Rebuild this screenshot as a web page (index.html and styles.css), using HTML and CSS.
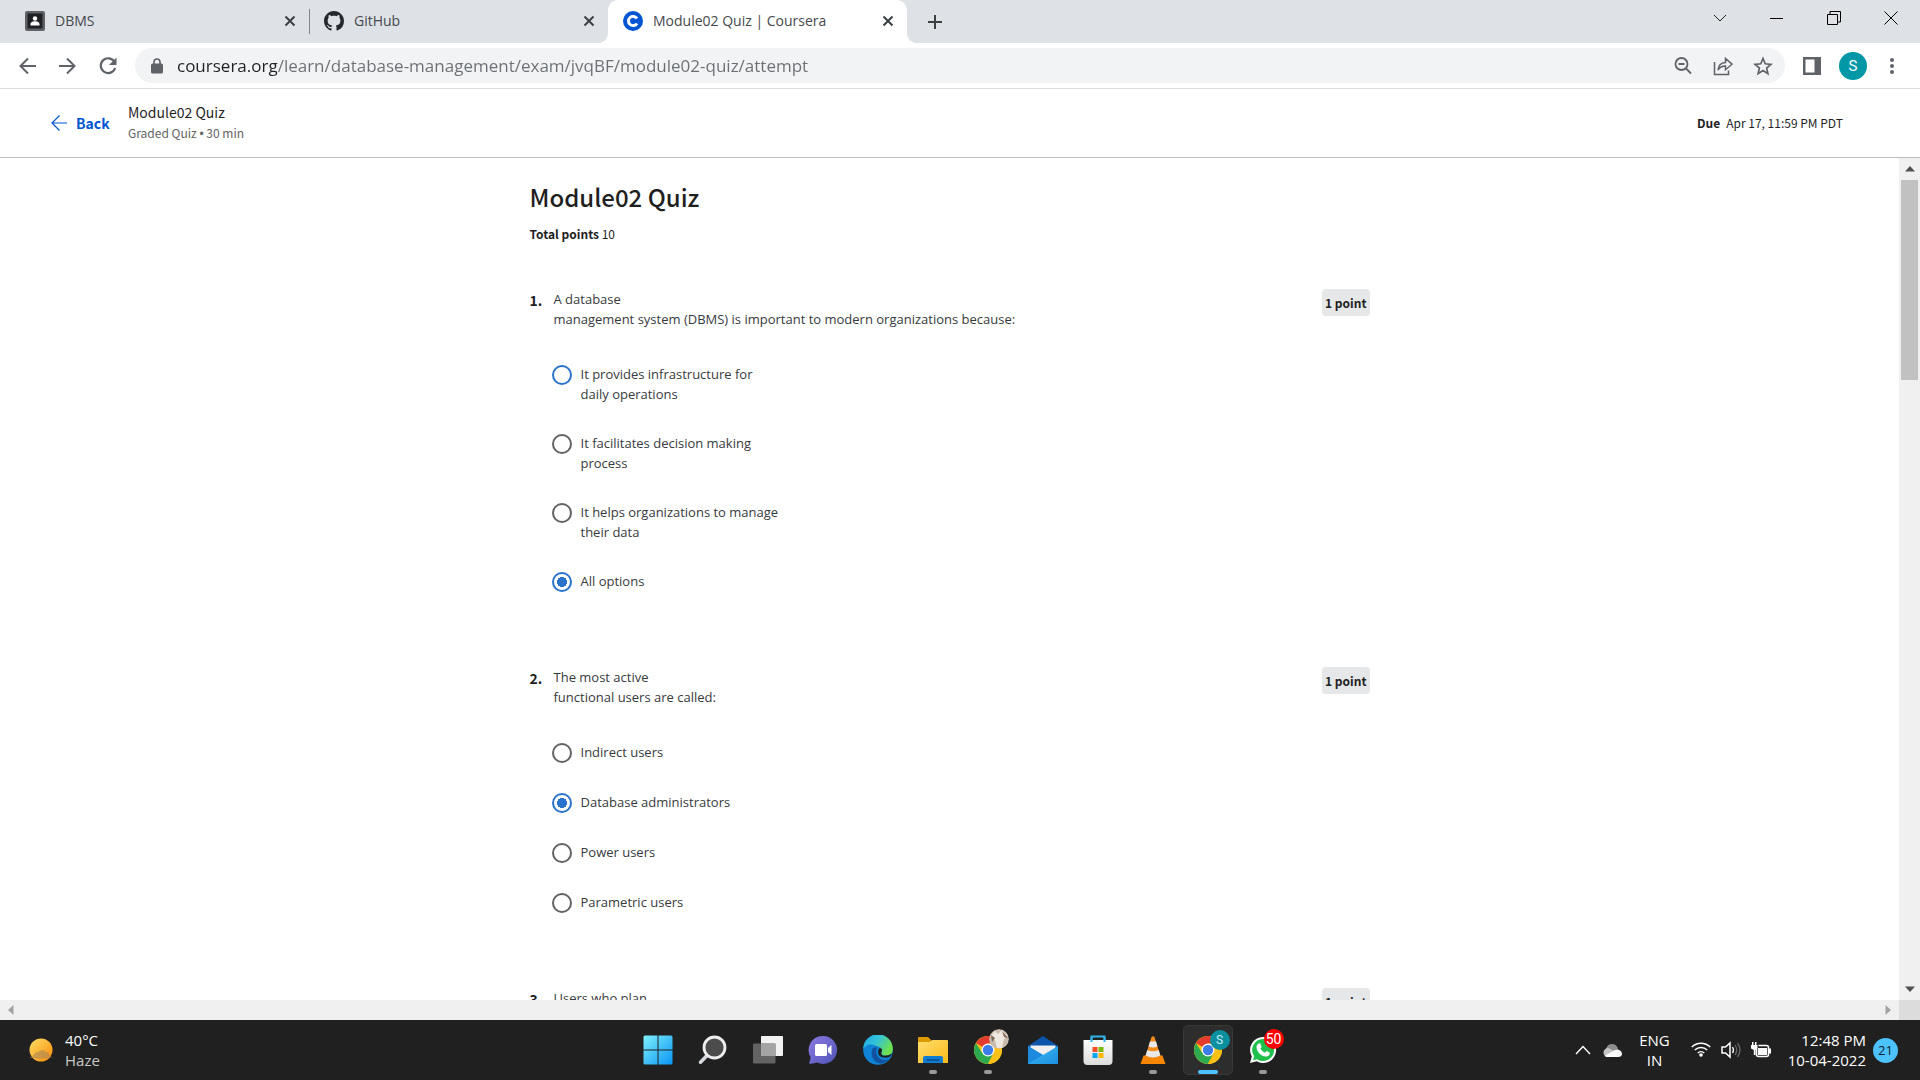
FILE: index.html
```html
<!DOCTYPE html>
<html lang="en">
<head>
<meta charset="utf-8">
<title>Module02 Quiz | Coursera</title>
<link rel="stylesheet" href="styles.css">
</head>
<body>
<svg class="defs" aria-hidden="true">
  <defs>
    <symbol id="i-close" viewBox="0 0 12 12"><path d="M1.5 1.5l9 9M10.500 1.500l-9 9" stroke="#3c4043" stroke-width="2" fill="none"/></symbol>
    <symbol id="i-chrome" viewBox="0 0 28 28">
      <circle cx="14" cy="14" r="14" fill="#fbc116"/>
      <path d="M14 14L1.900 7A14 14 0 0 1 26.100 7z" fill="#e33b2e"/>
      <path d="M1.900 7A14 14 0 0 0 14 28L19.600 17.200 14 14 8.400 17.200z" fill="#2da94f"/>
      <path d="M14 7.500H26.400A14 14 0 0 1 14 28L19.600 17.200z" fill="#fbc116"/>
      <circle cx="14" cy="14" r="6.500" fill="#fff"/><circle cx="14" cy="14" r="5.200" fill="#3d7de8"/>
    </symbol>
    <linearGradient id="g-win" x1="0" y1="0" x2="1" y2="1"><stop offset="0" stop-color="#7df1fb"/><stop offset="1" stop-color="#0a94f5"/></linearGradient>
    <linearGradient id="g-chat" x1="0" y1="0" x2="1" y2="1"><stop offset="0" stop-color="#8b7be0"/><stop offset="1" stop-color="#4f52b8"/></linearGradient>
    <linearGradient id="g-edge" x1="0" y1="0" x2="1" y2="0.500"><stop offset="0" stop-color="#1fa5e8"/><stop offset="0.500" stop-color="#33c3d8"/><stop offset="1" stop-color="#6fe04c"/></linearGradient>
    <linearGradient id="g-folder" x1="0" y1="0" x2="1" y2="1"><stop offset="0" stop-color="#ffdf70"/><stop offset="1" stop-color="#fbb917"/></linearGradient>
    <linearGradient id="g-sun" x1="0" y1="0" x2="1" y2="1"><stop offset="0" stop-color="#ffe067"/><stop offset="1" stop-color="#f98a05"/></linearGradient>
    <linearGradient id="g-bag" x1="0" y1="0" x2="0" y2="1"><stop offset="0" stop-color="#fff"/><stop offset="1" stop-color="#dcdcdc"/></linearGradient>
    <linearGradient id="g-mail" x1="0" y1="0" x2="1" y2="1"><stop offset="0" stop-color="#3dbdf2"/><stop offset="1" stop-color="#1b8fe0"/></linearGradient>
  </defs>
</svg>

<div class="tabstrip">
  <div class="tab">
    <svg class="favicon" viewBox="0 0 20 20"><rect width="20" height="20" rx="2" fill="#5f6368"/><rect x="2.500" y="2.500" width="15" height="15" fill="#202124"/><circle cx="10" cy="7.500" r="2.200" fill="#fff"/><path d="M5.500 14.500v-1.500c0-2 3-2.700 4.500-2.700s4.500.7 4.500 2.700v1.500z" fill="#fff"/></svg>
    <span class="tab-title">DBMS</span>
    <button class="tab-close" aria-label="Close DBMS"><svg width="12" height="12"><use href="#i-close"/></svg></button>
  </div>
  <div class="tab divided">
    <svg class="favicon" viewBox="0 0 16 16"><path fill="#24292f" d="M8 0C3.580 0 0 3.580 0 8c0 3.540 2.290 6.530 5.470 7.590.4.070.55-.17.55-.38 0-.19-.01-.82-.01-1.490-2.010.37-2.530-.49-2.690-.94-.09-.23-.48-.94-.82-1.130-.28-.15-.68-.52-.01-.53.63-.01 1.080.58 1.230.82.720 1.210 1.870.87 2.330.66.070-.52.280-.87.510-1.070-1.780-.2-3.640-.89-3.640-3.950 0-.87.310-1.590.820-2.150-.08-.2-.36-1.020.080-2.120 0 0 .67-.21 2.200.82.640-.18 1.320-.27 2-.27s1.360.09 2 .27c1.530-1.040 2.200-.82 2.200-.82.440 1.100.160 1.920.080 2.120.510.560.820 1.270.820 2.150 0 3.070-1.870 3.750-3.650 3.950.290.250.540.730.540 1.480 0 1.070-.01 1.930-.01 2.200 0 .21.150.46.550.38A8.010 8.010 0 0 0 16 8c0-4.420-3.580-8-8-8z"/></svg>
    <span class="tab-title">GitHub</span>
    <button class="tab-close" aria-label="Close GitHub"><svg width="12" height="12"><use href="#i-close"/></svg></button>
  </div>
  <div class="tab active">
    <svg class="favicon" viewBox="0 0 20 20"><circle cx="10" cy="10" r="10" fill="#0056d2"/><path d="M14 7.600A4.600 4.600 0 1 0 14 12.400" fill="none" stroke="#fff" stroke-width="2.900"/></svg>
    <span class="tab-title">Module02 Quiz | Coursera</span>
    <button class="tab-close" aria-label="Close Module02 Quiz"><svg width="12" height="12"><use href="#i-close"/></svg></button>
  </div>
  <button class="new-tab" aria-label="New tab"><svg width="16" height="16" viewBox="0 0 16 16"><path d="M8 1v14M1 8h14" stroke="#3c4043" stroke-width="2"/></svg></button>
  <div class="window-controls">
    <button aria-label="Search tabs"><svg width="14" height="14" viewBox="0 0 14 14"><path d="M1 4l6 6 6-6" fill="none" stroke="#222"/></svg></button>
    <button aria-label="Minimize"><svg width="14" height="14" viewBox="0 0 14 14"><path d="M0 7.500h13" stroke="#000"/></svg></button>
    <button aria-label="Restore"><svg width="14" height="14" viewBox="0 0 14 14"><path d="M.5 3.500h10v10H.5zM3 3V.5h10.500V11H11" fill="none" stroke="#000"/></svg></button>
    <button aria-label="Close"><svg width="14" height="14" viewBox="0 0 14 14"><path d="M.5.5l13 13M13.500.5l-13 13" stroke="#000"/></svg></button>
  </div>
</div>

<div class="toolbar">
  <button aria-label="Back"><svg width="20" height="20" viewBox="0 0 20 20"><path d="M18 10H3M10 2.500L2.500 10l7.500 7.500" fill="none" stroke="#5f6368" stroke-width="2"/></svg></button>
  <button aria-label="Forward"><svg width="20" height="20" viewBox="0 0 20 20"><path d="M1 10h15M9 2.500l7.500 7.500L9 17.500" fill="none" stroke="#5f6368" stroke-width="2"/></svg></button>
  <button aria-label="Reload"><svg width="20" height="20" viewBox="0 0 20 20"><path d="M16.500 5.800A7.400 7.400 0 1 0 17.200 12" fill="none" stroke="#5f6368" stroke-width="2.200"/><path d="M18.500 1.500v7.500H11z" fill="#5f6368"/></svg></button>
  <div class="omnibox">
    <svg width="12" height="16" viewBox="0 0 12 16"><rect x="0" y="5.500" width="12" height="10" rx="1.500" fill="#5f6368"/><path d="M3 6V4a3 3 0 0 1 6 0v2" fill="none" stroke="#5f6368" stroke-width="1.600"/></svg>
    <input class="url" type="text" aria-label="Address" value="coursera.org/learn/database-management/exam/jvqBF/module02-quiz/attempt">
    <button aria-label="Zoom"><svg width="20" height="20" viewBox="0 0 20 20"><circle cx="8.500" cy="8" r="6" fill="none" stroke="#5f6368" stroke-width="1.800"/><path d="M5.500 8h6M13 12.500l5 5" stroke="#5f6368" stroke-width="1.800"/></svg></button>
    <button aria-label="Share"><svg width="20" height="20" viewBox="0 0 20 20"><path d="M1.500 6v12.500h14v-4" fill="none" stroke="#5f6368" stroke-width="1.500"/><path d="M5 14c.5-5 3-7.300 7.500-7.500V2.500L19 8.200l-6.500 5.500v-3.600C9 10 7 11 5 14z" fill="none" stroke="#5f6368" stroke-width="1.500"/></svg></button>
    <button aria-label="Bookmark"><svg width="20" height="20" viewBox="0 0 20 20"><path d="M10 2.500l2.200 5.300 5.700.5-4.300 3.700 1.300 5.600-4.900-3-4.900 3 1.300-5.600L2.100 8.300l5.700-.5z" fill="none" stroke="#5f6368" stroke-width="1.700"/></svg></button>
  </div>
  <button class="side-panel" aria-label="Side panel"><svg width="18" height="18" viewBox="0 0 18 18"><path d="M0 0h18v18H0zM2.500 2.500v13h9v-13z" fill="#5f6368" fill-rule="evenodd"/></svg></button>
  <button class="avatar" aria-label="Profile">S</button>
  <button class="menu" aria-label="Menu"><svg width="6" height="18" viewBox="0 0 6 18"><g fill="#5f6368"><circle cx="3" cy="3" r="2"/><circle cx="3" cy="9" r="2"/><circle cx="3" cy="15" r="2"/></g></svg></button>
</div>

<header class="quiz-header">
  <a class="back" href="#"><svg width="16" height="16" viewBox="0 0 16 16"><path d="M16 8H1M8.500.5L1 8l7.500 7.500" fill="none" stroke="#0056d2" stroke-width="1.200"/></svg>Back</a>
  <div class="quiz-name">
    <div class="name">Module02 Quiz</div>
    <div class="meta">Graded Quiz <span class="dot">•</span> 30 min</div>
  </div>
  <div class="due"><strong>Due</strong><span>Apr 17, 11:59 PM PDT</span></div>
</header>

<div class="viewport">
  <main class="page">
    <div class="quiz">
      <h1>Module02 Quiz</h1>
      <p class="total"><strong>Total points</strong> 10</p>

      <section class="question">
        <span class="number">1.</span>
        <div class="body">
          <p class="prompt">A database<br>management system (DBMS) is important to modern organizations because:</p>
          <div class="options">
            <label class="option hover"><input type="radio" name="q1"><span>It provides infrastructure for<br>daily operations</span></label>
            <label class="option"><input type="radio" name="q1"><span>It facilitates decision making<br>process</span></label>
            <label class="option"><input type="radio" name="q1"><span>It helps organizations to manage<br>their data</span></label>
            <label class="option"><input type="radio" name="q1" checked><span>All options</span></label>
          </div>
        </div>
        <span class="points">1 point</span>
      </section>

      <section class="question">
        <span class="number">2.</span>
        <div class="body">
          <p class="prompt">The most active<br>functional users are called:</p>
          <div class="options">
            <label class="option"><input type="radio" name="q2"><span>Indirect users</span></label>
            <label class="option"><input type="radio" name="q2" checked><span>Database administrators</span></label>
            <label class="option"><input type="radio" name="q2"><span>Power users</span></label>
            <label class="option"><input type="radio" name="q2"><span>Parametric users</span></label>
          </div>
        </div>
        <span class="points">1 point</span>
      </section>

      <section class="question">
        <span class="number">3.</span>
        <div class="body"><p class="prompt">Users who plan</p></div>
        <span class="points">1 point</span>
      </section>
    </div>
  </main>
  <div class="vscroll">
    <svg width="10" height="6" viewBox="0 0 10 6"><path d="M0 5.500L5 0l5 5.500z" fill="#505050"/></svg>
    <div class="track"><div class="thumb"></div></div>
    <svg width="10" height="6" viewBox="0 0 10 6"><path d="M0 .5L5 6l5-5.500z" fill="#505050"/></svg>
  </div>
  <div class="hscroll">
    <svg width="6" height="10" viewBox="0 0 6 10"><path d="M5.500 0L0 5l5.500 5z" fill="#a3a3a3"/></svg>
    <svg width="6" height="10" viewBox="0 0 6 10"><path d="M.5 0L6 5 .5 10z" fill="#a3a3a3"/></svg>
  </div>
  <div class="corner"></div>
</div>

<footer class="taskbar">
  <div class="weather">
    <svg width="26" height="24" viewBox="0 0 26 24"><circle cx="13" cy="12" r="11.500" fill="url(#g-sun)"/><path d="M1 19.500q3-1 4-.5-1-2 2-3-2-1 3-2 5-4 8 0 4 .5 3 3 3 .5 2 2h3q-12 3-25 .5z" fill="#a8875a" opacity=".6"/></svg>
    <div><div>40°C</div><div class="haze">Haze</div></div>
  </div>
  <nav class="apps">
    <button aria-label="Start"><svg width="30" height="30" viewBox="0 0 30 30"><path d="M.5 2q0-1.500 1.500-1.500h12.500v14H.5zM15.500.5H28q1.500 0 1.500 1.500v12.500h-14zM.5 15.500h14v14H2q-1.500 0-1.500-1.500zM15.500 15.500h14V28q0 1.500-1.500 1.500H15.500z" fill="url(#g-win)"/></svg></button>
    <button aria-label="Search"><svg width="30" height="30" viewBox="0 0 30 30"><path d="M10 19.500l-7.500 7.700" stroke="#d5d8dc" stroke-width="3.500" stroke-linecap="round"/><circle cx="16.500" cy="12.500" r="10.500" fill="#4b4b4b" stroke="#eceef0" stroke-width="2.800"/></svg></button>
    <button aria-label="Task view"><svg width="30" height="30" viewBox="0 0 30 30"><rect x="8" y="1" width="22" height="20" rx="1" fill="#f2f2f2"/><rect x="0" y="8.500" width="22.500" height="20" rx="1" fill="#636363"/><path d="M8 8.500h14.500V21H8z" fill="#a4a4a4"/></svg></button>
    <button aria-label="Chat"><svg width="30" height="30" viewBox="0 0 30 30"><path d="M15 1a14 14 0 1 1-6 26.600Q5 29 1 28.500q1.500-3 1.500-6.500A14 14 0 0 1 15 1z" fill="url(#g-chat)"/><rect x="7" y="9" width="12" height="12" rx="1.500" fill="#fff"/><path d="M20 13l3.500-3v10L20 17z" fill="#fff"/></svg></button>
    <button aria-label="Edge"><svg width="30" height="30" viewBox="0 0 30 30"><circle cx="15" cy="15" r="14.800" fill="#0f83d6"/><path d="M.2 14A14.800 14.800 0 0 1 29.800 14q0 6-6.500 6.500-5.500 0-4.800-3 1-6-5-6.500Q5 7 .2 14z" fill="url(#g-edge)"/><path d="M10 13q-4 8 3 14 7 4 13-3-7 3-11-2-3-4-1-10z" fill="#10529f"/><path d="M19 16q-2 3 1 4.500 4 1 9-2-1 2-2.500 3.500-6 2-10-1-3-4 0-8 3 0 2.500 3z" fill="#202020"/></svg></button>
    <button class="running" aria-label="File Explorer"><svg width="30" height="30" viewBox="0 0 30 30"><path d="M0 2.500Q0 2 1 2h9l3 3v6H0z" fill="#dd9a05"/><path d="M0 7h12l2-2h15q1 0 1 1v22H0z" fill="url(#g-folder)"/><path d="M5 28v-5q0-2 2-2h16q2 0 2 2v5z" fill="#127cd1"/><path d="M8.500 25h13" stroke="#064c8c" stroke-width="1.500"/></svg></button>
    <button class="running" aria-label="Chrome, profile 1"><svg width="28" height="28"><use href="#i-chrome"/></svg><svg class="profile" width="20" height="20" viewBox="0 0 20 20"><circle cx="10" cy="10" r="10" fill="#c9bbad"/><path d="M2 7l4-5 3 3 4-4 5 6-3 3-2 9H8L6 11z" fill="#eee8e0"/><path d="M2 6l4 3-3 4zM13 2l2 6 4 1z" fill="#7d6758"/></svg></button>
    <button aria-label="Mail"><svg width="30" height="28" viewBox="0 0 30 28"><path d="M0 10L15 0l15 10v5H0z" fill="#0c55ab"/><path d="M2.500 9.500h25V20h-25z" fill="#f0f0f0"/><path d="M0 10l15 9 15-9v18H0z" fill="url(#g-mail)"/><path d="M0 28l15-9L0 10z" fill="#1d8ade"/></svg></button>
    <button aria-label="Microsoft Store"><svg width="30" height="30" viewBox="0 0 30 30"><path d="M8.500 7V1.500h13V7" fill="none" stroke="#31b1ea" stroke-width="2"/><path d="M.5 5h29v21q0 4-4 4h-21q-4 0-4-4z" fill="url(#g-bag)"/><path d="M8.500 2v5M21.500 2v5" stroke="#31b1ea" stroke-width="2"/><path d="M9.500 12H14.500v5h-5z" fill="#f25022"/><path d="M15.500 12h5v5h-5z" fill="#7fba00"/><path d="M9.500 18h5v5h-5z" fill="#00a4ef"/><path d="M15.500 18h5v5h-5z" fill="#ffb900"/></svg></button>
    <button class="running" aria-label="VLC"><svg width="26" height="28" viewBox="0 0 26 28"><path d="M3.500 19.500h19L25.500 28H.5z" fill="#f78606"/><path d="M11.500 1q1.500-1.500 3 0L20.500 20q-7.500 4-15 0z" fill="#f28a1c"/><path d="M10 5.500h6l1.500 5q-4.500 2-9 0zM7.300 14q5.700 2.500 11.400 0l1.700 5.500q-7.400 4-14.800 0z" fill="#e8e8e8"/></svg></button>
    <button class="running current" aria-label="Chrome, profile 2"><svg width="28" height="28"><use href="#i-chrome"/></svg><span class="badge teal">S</span></button>
    <button class="running" aria-label="WhatsApp"><svg width="28" height="28" viewBox="0 0 28 28"><path d="M14 1a13 13 0 1 1-6.300 24.300L1 27l1.800-6.500A13 13 0 0 1 14 1z" fill="#fff"/><path d="M14 3a11 11 0 1 1-6 20.200L4 24.300 5.200 20.300A11 11 0 0 1 14 3z" fill="#1fbf4b"/><path d="M9 8c1-1 2-1 2.500 0l1 2.500c0 1-1 1.500-1 2 1 2 2.500 3.500 4.500 4.200l1.500-1.600 3.200 1.500c.5 3-2 4.200-4 4C11.500 20 7.500 15 7.500 11.500 7.500 10 8 9 9 8z" fill="#fff"/></svg><span class="badge red">50</span></button>
  </nav>
  <div class="tray">
    <button aria-label="Show hidden icons"><svg width="16" height="10" viewBox="0 0 16 10"><path d="M1 9l7-7.500L15 9" fill="none" stroke="#fff" stroke-width="1.400"/></svg></button>
    <button aria-label="OneDrive"><svg width="20" height="14" viewBox="0 0 20 14"><path d="M4 8a6 6 0 0 1 12-2l3 3-9 4z" fill="#8d8d8d"/><path d="M5 14a4.500 4.500 0 1 1 2-8.800L14 9l-4 5z" fill="#c4c4c4"/><path d="M2.500 13L13 7q6-1 7 3.500 0 3.500-4 3.500H5z" fill="#fff"/></svg></button>
    <div class="lang">ENG<br>IN</div>
    <div class="status">
      <svg width="20" height="16" viewBox="0 0 20 16"><g fill="none" stroke="#fff" stroke-width="1.500"><path d="M.8 6a13 13 0 0 1 18.400 0M3.800 9a8.800 8.800 0 0 1 12.400 0M6.800 12a4.600 4.600 0 0 1 6.400 0"/></g><circle cx="10" cy="14" r="1.800" fill="#fff"/></svg>
      <svg width="20" height="18" viewBox="0 0 20 18"><path d="M1 6h3.500L9 2v14l-4.500-4H1z" fill="none" stroke="#fff" stroke-width="1.500"/><path d="M11.500 6q2 3 0 6" fill="none" stroke="#fff" stroke-width="1.300"/><path d="M14 4q3.500 5 0 10M16.500 2q5 7 0 14" fill="none" stroke="#666" stroke-width="1.300"/></svg>
      <svg width="20" height="18" viewBox="0 0 20 18"><path d="M7.500 4.500h8q2 0 2 2v7q0 2-2 2h-8q-2 0-2-2V8" fill="none" stroke="#fff" stroke-width="1.600"/><path d="M7 7h9v7H7zM18 7.500h2v5h-2zM0 4h6.500v3.500L4.500 9v5H2.800V9L0 7.500zM1 1h1.500v3H1zM4 1h1.500v3H4z" fill="#fff"/></svg>
    </div>
    <div class="clock">12:48 PM<br>10-04-2022</div>
    <span class="notify">21</span>
  </div>
</footer>
</body>
</html>
```
FILE: styles.css
```css
* { box-sizing: border-box; }

body {
  margin: 0;
  height: 100vh;
  display: flex;
  flex-direction: column;
  overflow: hidden;
  background: #fff;
  color: #1f1f1f;
  font-family: "Open Sans", "Noto Sans", sans-serif;
}

button {
  padding: 0;
  border: 0;
  background: none;
  font: inherit;
  color: inherit;
  display: flex;
  align-items: center;
  justify-content: center;
}

svg { display: block; flex: none; }
.defs { position: absolute; width: 0; height: 0; }

/* Browser tabs */
.tabstrip {
  display: flex;
  height: 43px;
  padding-left: 10px;
  background: #dee1e6;
}

.tab {
  position: relative;
  display: flex;
  align-items: center;
  gap: 10px;
  width: 299px;
  padding: 0 13px 1px 15px;
  font-size: 14px;
  color: #45494d;
}

.tab.divided::before {
  content: "";
  position: absolute;
  left: 0;
  top: 9px;
  height: 25px;
  width: 1px;
  background: #80868b;
}

.tab.active {
  background: #fff;
  border-radius: 10px 10px 0 0;
}

.tab.active::before,
.tab.active::after {
  content: "";
  position: absolute;
  bottom: 0;
  width: 10px;
  height: 10px;
}

.tab.active::before { right: 100%; background: radial-gradient(circle at 0 0, transparent 10px, #fff 10px); }
.tab.active::after { left: 100%; background: radial-gradient(circle at 100% 0, transparent 10px, #fff 10px); }

.favicon { width: 20px; height: 20px; }
.tab-title { flex: 1; padding-bottom: 2px; white-space: nowrap; }
.tab-close { width: 12px; height: 12px; }
.new-tab { width: 56px; }

.window-controls {
  display: flex;
  margin-left: auto;
  padding-right: 1px;
  height: 36px;
}
.window-controls button { width: 57px; }

/* Address bar */
.toolbar {
  display: flex;
  align-items: center;
  gap: 20px;
  height: 46px;
  padding: 0 25px 0 18px;
  border-bottom: 1px solid #dadce0;
}

.omnibox {
  flex: 1;
  display: flex;
  align-items: center;
  gap: 20px;
  height: 35px;
  margin-left: -3px;
  padding: 0 12px 0 16px;
  border-radius: 18px;
  background: #f1f3f4;
}

.url {
  flex: 1;
  min-width: 0;
  margin-left: -6px;
  padding: 0;
  border: 0;
  outline: 0;
  font: 17px/24px "Open Sans", "Noto Sans", sans-serif;
  color: transparent;
  background: linear-gradient(90deg, #202124 100px, #6b6f73 100px);
  background-clip: text;
  -webkit-background-clip: text;
}

.side-panel { margin: 0 -2px; }
.avatar {
  width: 28px;
  height: 28px;
  border-radius: 50%;
  background: #0097a7;
  color: #fff;
  font: 15px/28px Roboto, sans-serif;
}
.menu { width: 6px; margin-left: 2px; }

/* Quiz header */
.quiz-header {
  display: flex;
  align-items: center;
  height: 69px;
  padding: 0 77px 0 51px;
  border-bottom: 1px solid #bdbdbd;
  font-family: "Noto Sans CJK SC", sans-serif;
}

.back {
  display: flex;
  align-items: center;
  gap: 9px;
  width: 77px;
  color: #0056d2;
  font-size: 14px;
  font-weight: 700;
  text-decoration: none;
}

.name { font-size: 14px; line-height: 21px; }
.meta { font-size: 12px; line-height: 20px; color: #636363; }
.dot { font-family: "Liberation Sans", sans-serif; }

.due {
  display: flex;
  gap: 6px;
  margin-left: auto;
  padding-bottom: 2px;
  font-size: 12px;
}

/* Page viewport with its scrollbars */
.viewport {
  flex: 1;
  min-height: 0;
  display: grid;
  grid-template: minmax(0, 1fr) 20px / minmax(0, 1fr) 21px;
}

.page { overflow: hidden; }

.vscroll {
  display: flex;
  flex-direction: column;
  align-items: center;
  gap: 8px;
  padding: 8px 0;
  background: #f0f0f0;
}
.track { flex: 1; }
.thumb { width: 17px; height: 200px; background: #c1c1c1; }

.hscroll {
  display: flex;
  align-items: center;
  justify-content: space-between;
  padding: 0 8px;
  background: #f0f0f0;
}
.corner { background: #dcdcdc; }

/* Quiz */
.quiz {
  max-width: 840px;
  margin: 0 auto;
  padding-top: 21px;
}

h1 {
  margin: 0;
  font: 500 24px/36px "Noto Sans CJK SC", sans-serif;
}

.total {
  margin: 9px 0 45px;
  font: 12px/20px "Noto Sans CJK SC", sans-serif;
}

.question {
  display: grid;
  grid-template-columns: 24px 1fr auto;
  align-items: start;
  margin-bottom: 75px;
}

.number {
  padding-top: 1px;
  font: 700 14px/20px "Noto Sans CJK SC", sans-serif;
}

.prompt { margin: 0; font-size: 13px; line-height: 20px; color: #373a3c; }

.points {
  padding: 0 3px;
  border-radius: 4px;
  background: #e5e7e8;
  font: 700 12px/27px "Noto Sans CJK SC", sans-serif;
}

.options {
  display: flex;
  flex-direction: column;
  gap: 29px;
  margin-top: 35px;
}

.option {
  display: flex;
  align-items: flex-start;
  gap: 9px;
  font-size: 13px;
  line-height: 20px;
  color: #373a3c;
}

.option input {
  appearance: none;
  flex: none;
  width: 20px;
  height: 20px;
  margin: 1px 0 0 -2px;
  border: 2px solid #636363;
  border-radius: 50%;
  background: #fff;
}
.option.hover input { border-color: #2a73cc; }
.option input:checked {
  border-color: #2a73cc;
  background: radial-gradient(circle, #2a73cc 5px, #fff 5px);
}

/* Taskbar */
.taskbar {
  display: grid;
  grid-template-columns: 1fr auto 1fr;
  align-items: center;
  height: 60px;
  background: #202020;
  color: #fff;
  font-size: 15px;
  line-height: 20px;
}

.weather {
  display: flex;
  align-items: center;
  gap: 11px;
  padding-left: 28px;
}
.haze { color: #c8c8c8; }

.apps { display: flex; gap: 5px; }
.apps button {
  position: relative;
  width: 50px;
  height: 50px;
  border-radius: 5px;
}
.running::after {
  content: "";
  position: absolute;
  bottom: 1px;
  left: 21px;
  width: 8px;
  height: 4px;
  border-radius: 2px;
  background: #9a9a9a;
}
.apps .current { background: #2d2d2d; border: 1px solid #383838; }
.current::after { left: 14px; bottom: 0; width: 20px; background: #4cc2ff; }

.badge, .profile {
  position: absolute;
  top: 4px;
  left: 26px;
  width: 20px;
  height: 20px;
  border-radius: 50%;
}
.badge {
  font: 12px/20px Roboto, sans-serif;
  text-align: center;
}
.teal { background: #0c8f9e; color: #c5eef2; }
.red { background: #f00; font-size: 14px; }

.tray {
  display: flex;
  align-items: center;
  justify-content: flex-end;
  padding-right: 22px;
  text-align: center;
}
.tray button { margin-right: 11px; }
.lang { margin: 0 21px 0 6px; }
.status { display: flex; gap: 10px; }
.clock { margin-left: 17px; text-align: right; }
.notify {
  width: 25px;
  margin-left: 7px;
  border-radius: 50%;
  background: #4cc2ff;
  color: #10222e;
  font-size: 13px;
  line-height: 25px;
}
```
